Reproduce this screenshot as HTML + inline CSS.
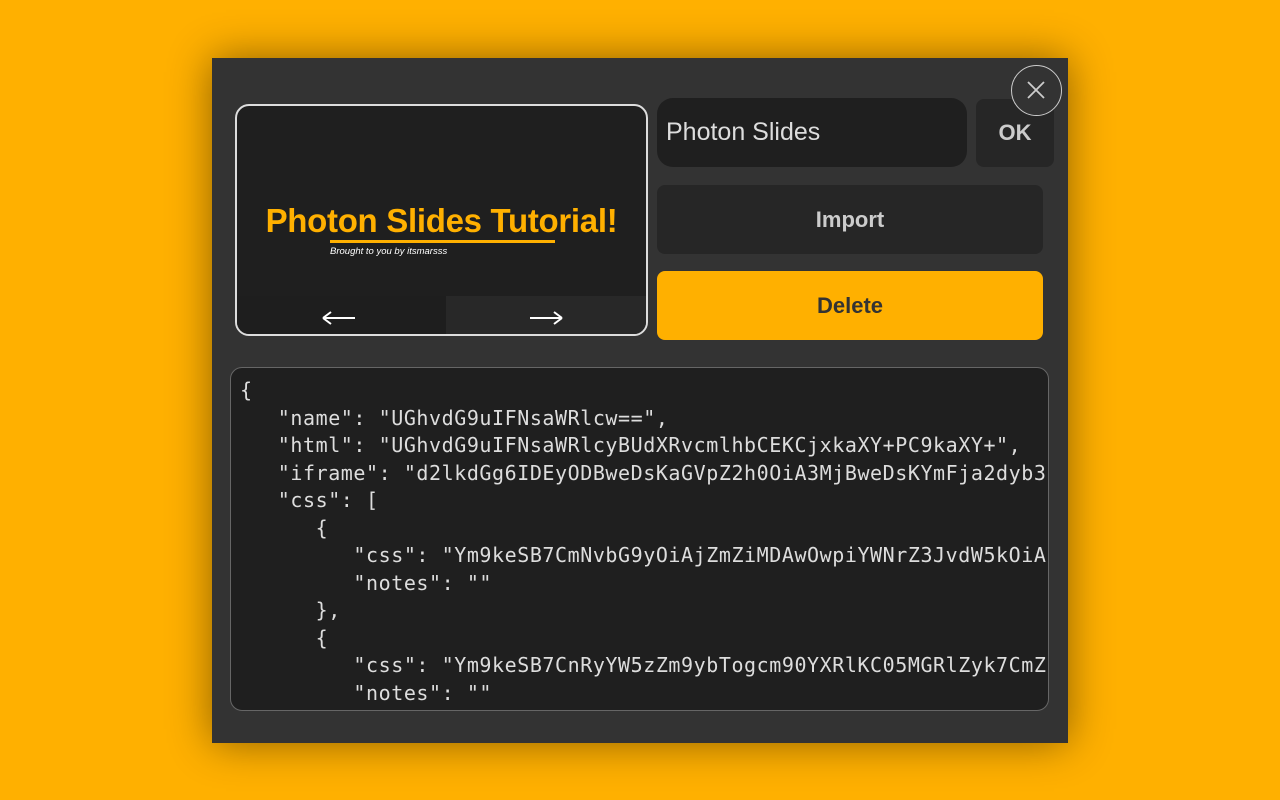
<!DOCTYPE html>
<html><head><style>
body{margin:0;width:1280px;height:800px;background:#ffb000;position:relative;overflow:hidden;font-family:"Liberation Sans",sans-serif}
.modal{position:absolute;left:212px;top:58px;width:856px;height:685px;background:#333;box-shadow:0 0 40px rgba(0,0,0,.45)}
.ab{position:absolute;box-sizing:border-box}
.prev{left:23px;top:46px;width:413px;height:232px;border:2px solid #ddd;border-radius:14px;background:#1f1f1f;overflow:hidden}
.title{position:absolute;left:0;right:0;top:96px;text-align:center;color:#ffb000;font-weight:bold;font-size:33px;letter-spacing:-0.3px}
.code{left:18px;top:309px;width:819px;height:344px;border:1.5px solid #666;border-radius:12px;background:#1f1f1f;overflow:hidden}
pre{margin:0;padding:9px 0 0 9px;font-family:"DejaVu Sans Mono",monospace;font-size:20px;letter-spacing:0.56px;line-height:27.5px;color:#ddd;white-space:pre}
.btn{background:#262626;border-radius:8px;color:#ccc;font-weight:bold;font-size:22px;text-align:center}
</style></head><body>
<div class="modal">
 <div class="ab prev">
  <div class="title">Photon Slides Tutorial!</div>
  <div class="ab" style="left:93px;top:134px;width:225px;height:3px;background:#ffb000"></div>
  <div class="ab" style="left:93px;top:140px;color:#fff;font-size:9.5px;font-style:italic">Brought to you by itsmarsss</div>
  <div class="ab" style="left:0;top:190px;width:209px;height:40px;background:#1e1e1e">
   <svg width="209" height="40"><path d="M86 22H118M86 22L94 16M86 22L94 28" stroke="#fff" stroke-width="2" fill="none"/></svg></div>
  <div class="ab" style="left:209px;top:190px;width:204px;height:40px;background:#282828">
   <svg width="204" height="40"><path d="M84 22H116M116 22L108 16M116 22L108 28" stroke="#fff" stroke-width="2" fill="none"/></svg></div>
 </div>
 <div class="ab" style="left:445px;top:40px;width:310px;height:69px;background:#1f1f1f;border-radius:16px;color:#ddd;font-size:25px;line-height:69px;padding-left:9px">Photon Slides</div>
 <div class="ab btn" style="left:764px;top:41px;width:78px;height:68px;line-height:68px">OK</div>
 <div class="ab btn" style="left:445px;top:127px;width:386px;height:69px;line-height:69px">Import</div>
 <div class="ab btn" style="left:445px;top:213px;width:386px;height:69px;line-height:69px;background:#ffb000;color:#333">Delete</div>
 <div class="ab" style="left:799px;top:7px;width:51px;height:51px;border:1.5px solid #ccc;border-radius:50%;background:#333">
  <svg width="48" height="48" style="position:absolute;left:0;top:0"><path d="M16 16L32 32M32 16L16 32" stroke="#ccc" stroke-width="1.8"/></svg>
 </div>
 <div class="ab code"><pre>{
   "name": "UGhvdG9uIFNsaWRlcw==",
   "html": "UGhvdG9uIFNsaWRlcyBUdXRvcmlhbCEKCjxkaXY+PC9kaXY+",
   "iframe": "d2lkdGg6IDEyODBweDsKaGVpZ2h0OiA3MjBweDsKYmFja2dyb3",
   "css": [
      {
         "css": "Ym9keSB7CmNvbG9yOiAjZmZiMDAwOwpiYWNrZ3JvdW5kOiA",
         "notes": ""
      },
      {
         "css": "Ym9keSB7CnRyYW5zZm9ybTogcm90YXRlKC05MGRlZyk7CmZ",
         "notes": ""
      }</pre></div>
</div>
</body></html>
